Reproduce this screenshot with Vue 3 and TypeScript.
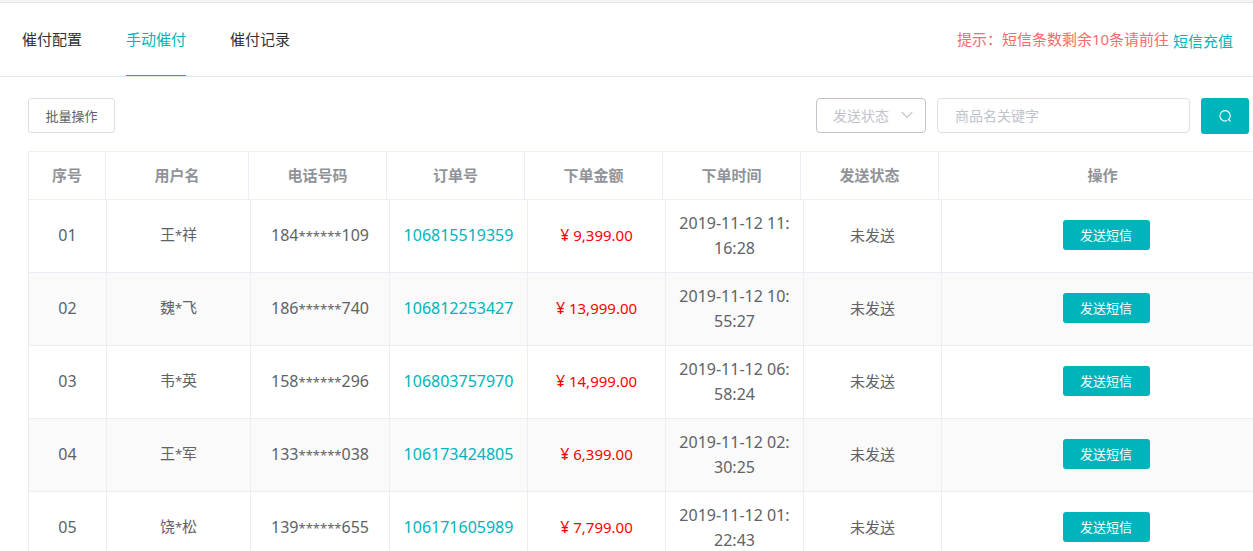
<script setup lang="ts">
import { ref } from 'vue'

interface Order {
  no: string
  user: string[]
  phone: string[]
  order: string
  amount: string
  time: string[]
  status: string
}

const tabs = ['催付配置', '手动催付', '催付记录']
const activeTab = ref('手动催付')
const status = ref('')
const keyword = ref('')

const columns = ['序号', '用户名', '电话号码', '订单号', '下单金额', '下单时间', '发送状态', '操作']

const orders: Order[] = [
  { no: '01', user: ['王', '祥'], phone: ['184', '109'], order: '106815519359', amount: '9,399.00', time: ['2019-11-12 11:', '16:28'], status: '未发送' },
  { no: '02', user: ['魏', '飞'], phone: ['186', '740'], order: '106812253427', amount: '13,999.00', time: ['2019-11-12 10:', '55:27'], status: '未发送' },
  { no: '03', user: ['韦', '英'], phone: ['158', '296'], order: '106803757970', amount: '14,999.00', time: ['2019-11-12 06:', '58:24'], status: '未发送' },
  { no: '04', user: ['王', '军'], phone: ['133', '038'], order: '106173424805', amount: '6,399.00', time: ['2019-11-12 02:', '30:25'], status: '未发送' },
  { no: '05', user: ['饶', '松'], phone: ['139', '655'], order: '106171605989', amount: '7,799.00', time: ['2019-11-12 01:', '22:43'], status: '未发送' },
]
</script>

<template>
  <div class="page">
    <header class="top">
      <nav class="tabs">
        <button
          v-for="t in tabs"
          :key="t"
          type="button"
          class="tab"
          :class="{ active: t === activeTab }"
          @click="activeTab = t"
        >{{ t }}</button>
      </nav>
      <p class="notice">提示：短信条数剩余10条请前往 <a href="#recharge">短信充值</a></p>
    </header>

    <div class="toolbar">
      <button type="button" class="batch">批量操作</button>
      <form class="filters" @submit.prevent>
        <div class="select">
          <select v-model="status" aria-label="发送状态">
            <option value="">发送状态</option>
            <option value="unsent">未发送</option>
          </select>
          <svg class="arrow" viewBox="0 0 12 8" aria-hidden="true"><path d="M0.7 0.9 L6 6.3 L11.3 0.9" /></svg>
        </div>
        <input v-model="keyword" class="keyword" type="text" placeholder="商品名关键字" aria-label="商品名关键字" />
        <button type="submit" class="search" aria-label="搜索">
          <svg viewBox="0 0 14 14" aria-hidden="true"><path d="M9.3 11.5 A5.2 5.2 0 1 1 11 10.2 M10 10 L12.6 12.4" /></svg>
        </button>
      </form>
    </div>

    <div class="grid">
      <table class="head">
        <colgroup><col v-for="(c, i) in columns" :key="c" :class="'h' + i" /></colgroup>
        <thead>
          <tr><th v-for="c in columns" :key="c" scope="col">{{ c }}</th></tr>
        </thead>
      </table>
      <table class="body" aria-label="催付订单">
        <colgroup><col v-for="(c, i) in columns" :key="c" :class="'b' + i" /></colgroup>
        <tbody>
          <tr v-for="o in orders" :key="o.no">
            <td class="num">{{ o.no }}</td>
            <td>{{ o.user[0] }}<span class="mask">*</span>{{ o.user[1] }}</td>
            <td class="num tall">{{ o.phone[0] }}<span class="mask">******</span>{{ o.phone[1] }}</td>
            <td class="num"><a href="#order">{{ o.order }}</a></td>
            <td class="amount"><span class="yuan">¥</span> {{ o.amount }}</td>
            <td class="num tall">{{ o.time[0] }}<br />{{ o.time[1] }}</td>
            <td>{{ o.status }}</td>
            <td><button type="button" class="send">发送短信</button></td>
          </tr>
        </tbody>
      </table>
    </div>
  </div>
</template>

<style>
body {
  margin: 0;
  background: #fff;
}
</style>

<style scoped>
.page {
  box-sizing: border-box;
  height: 100vh;
  overflow: hidden;
  border-top: 2px solid #f3f3f4;
  background: #fff;
  color: #606266;
  font-family: "Noto Sans", "Noto Sans CJK SC", sans-serif;
  font-size: 15px;
}

button,
input,
select {
  box-sizing: border-box;
  margin: 0;
  font-family: inherit;
}

button {
  cursor: pointer;
}

a {
  color: #00b4bb;
  text-decoration: none;
}

.top {
  display: flex;
  justify-content: space-between;
  height: 73px;
  padding: 0 20px 0 22px;
  border-top: 1px solid #e4e4e6;
  border-bottom: 1px solid #e4e7ed;
}

.tabs {
  display: flex;
  gap: 44px;
}

.tab {
  padding: 0;
  border: 0;
  border-bottom: 1px solid transparent;
  background: none;
  color: #303133;
  font-size: 15px;
  line-height: 72px;
}

.tab.active {
  border-bottom-color: #00b4bb;
  color: #00b4bb;
}

.notice {
  margin: 0;
  color: #f56c6c;
  line-height: 72px;
}

.notice a {
  display: inline-block;
  line-height: 20px;
  vertical-align: middle;
}

.toolbar {
  display: flex;
  justify-content: space-between;
  align-items: flex-start;
  padding: 21px 4px 17px 28px;
}

.batch {
  min-width: 87px;
  height: 35px;
  padding: 0 16px;
  border: 1px solid #dcdfe6;
  border-radius: 3px;
  background: #fff;
  color: #606266;
  font-size: 13px;
}

.filters {
  display: flex;
  align-items: flex-start;
  gap: 11px;
}

.select {
  position: relative;
  width: 110px;
}

.select select {
  display: block;
  width: 100%;
  height: 35px;
  padding: 0 30px 0 16px;
  border: 1px solid #c0c4cc;
  border-radius: 4px;
  appearance: none;
  background: #fff;
  color: #c0c4cc;
  font-size: 14px;
}

.arrow {
  position: absolute;
  top: 13px;
  right: 13px;
  width: 12px;
  height: 8px;
  fill: none;
  stroke: #c0c4cc;
  stroke-width: 1.2;
  pointer-events: none;
}

.keyword {
  width: 253px;
  height: 35px;
  padding: 0 17px;
  border: 1px solid #dcdfe6;
  border-radius: 4px;
  color: #606266;
  font-size: 14px;
}

.keyword::placeholder {
  color: #c0c4cc;
}

.search {
  display: flex;
  align-items: center;
  justify-content: center;
  width: 48px;
  height: 36px;
  padding: 0;
  border: 0;
  border-radius: 3px;
  background: #00b4bb;
}

.search svg {
  width: 14px;
  height: 14px;
  fill: none;
  stroke: #fff;
  stroke-width: 1.1;
}

.grid {
  margin: 0 -18px 0 28px;
  border: 1px solid #ebeef5;
  border-width: 1px 0 0 1px;
}

table {
  width: 100%;
  border-collapse: separate;
  border-spacing: 0;
  table-layout: fixed;
}

.head {
  width: calc(100% - 4px);
}

.h0 { width: 77px; }
.h1 { width: 143px; }
.b0 { width: 78px; }
.b1 { width: 144px; }
.b2 { width: 139px; }
.h2, .h3, .h4, .h5, .h6,
.b3, .b4, .b5, .b6 { width: 138px; }

th,
td {
  box-sizing: border-box;
  padding: 0 0 2px;
  border: 1px solid #ebeef5;
  border-width: 0 1px 1px 0;
  text-align: center;
}

th {
  height: 48px;
  color: #909399;
  font-weight: 700;
}

td {
  height: 73px;
  line-height: 25px;
}

.tall {
  padding-bottom: 0;
}

tbody tr:nth-child(even) td {
  background: #fafafa;
}

.num {
  font-size: 16px;
}

.mask {
  font-size: 13px;
}

.amount {
  color: #f00;
}

.yuan {
  font-size: 16px;
}

.send {
  min-width: 87px;
  height: 30px;
  padding: 0 17px;
  border: 0;
  border-radius: 3px;
  background: #00b4bb;
  color: #fff;
  font-size: 13px;
  line-height: 30px;
}
</style>
